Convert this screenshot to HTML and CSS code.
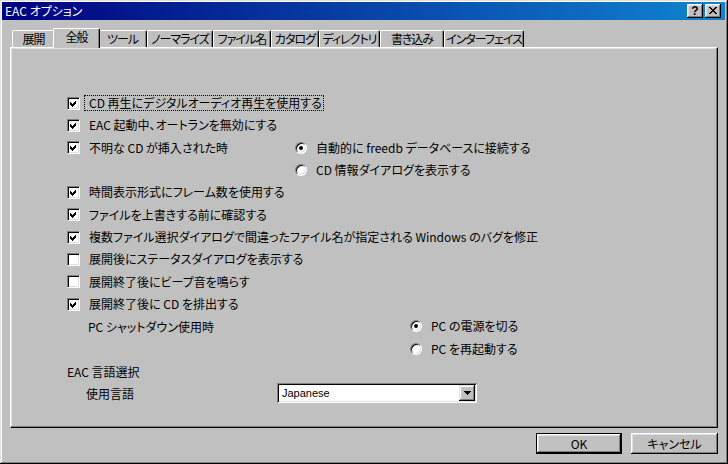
FILE: index.html
```html
<!DOCTYPE html>
<html lang="ja">
<head>
    <meta charset="UTF-8">
    <title>EAC オプション</title>
    <link rel="stylesheet" href="styles.css">
</head>
<body>
    <div class="window">
        <div class="titlebar">
            <span class="title">EAC オプション</span>
            <div class="title-buttons">
                <span class="tbtn help">?</span>
                <span class="tbtn close">
                    <svg width="8" height="7" viewBox="0 0 8 7" shape-rendering="crispEdges"><path d="M0 0h2v1h1v1h2v-1h1v-1h2v1h-1v1h-1v1h-1v1h1v1h1v1h1v1h-2v-1h-1v-1h-2v1h-1v1h-2v-1h1v-1h1v-1h1v-1h-1v-1h-1v-1h-1z" fill="#000"/></svg>
                </span>
            </div>
        </div>

        <div class="content">
            <div class="tabs">
                <div class="tab">展開</div>
                <div class="tab active">全般</div>
                <div class="tab">ツール</div>
                <div class="tab">ノーマライズ</div>
                <div class="tab">ファイル名</div>
                <div class="tab">カタログ</div>
                <div class="tab">ディレクトリ</div>
                <div class="tab">書き込み</div>
                <div class="tab">インターフェイス</div>
            </div>

            <div class="panel">
                <div class="options">
                    <div class="row">
                        <span class="cb checked"><svg width="11" height="11" viewBox="0 0 11 11" shape-rendering="crispEdges"><path d="M2 4L4 6L8 2V5L4 9L2 7Z"/></svg></span>
                        <span class="label focus">CD 再生にデジタルオーディオ再生を使用する</span>
                    </div>
                    <div class="row">
                        <span class="cb checked"><svg width="11" height="11" viewBox="0 0 11 11" shape-rendering="crispEdges"><path d="M2 4L4 6L8 2V5L4 9L2 7Z"/></svg></span>
                        <span class="label">EAC 起動中、オートランを無効にする</span>
                    </div>
                    <div class="row">
                        <div class="lead wide">
                            <span class="cb checked"><svg width="11" height="11" viewBox="0 0 11 11" shape-rendering="crispEdges"><path d="M2 4L4 6L8 2V5L4 9L2 7Z"/></svg></span>
                            <span class="label">不明な CD が挿入された時</span>
                        </div>
                        <span class="radio on"></span>
                        <span class="label">自動的に freedb データベースに接続する</span>
                    </div>
                    <div class="row">
                        <div class="lead wide"></div>
                        <span class="radio"></span>
                        <span class="label">CD 情報ダイアログを表示する</span>
                    </div>
                    <div class="row">
                        <span class="cb checked"><svg width="11" height="11" viewBox="0 0 11 11" shape-rendering="crispEdges"><path d="M2 4L4 6L8 2V5L4 9L2 7Z"/></svg></span>
                        <span class="label">時間表示形式にフレーム数を使用する</span>
                    </div>
                    <div class="row">
                        <span class="cb checked"><svg width="11" height="11" viewBox="0 0 11 11" shape-rendering="crispEdges"><path d="M2 4L4 6L8 2V5L4 9L2 7Z"/></svg></span>
                        <span class="label">ファイルを上書きする前に確認する</span>
                    </div>
                    <div class="row">
                        <span class="cb checked"><svg width="11" height="11" viewBox="0 0 11 11" shape-rendering="crispEdges"><path d="M2 4L4 6L8 2V5L4 9L2 7Z"/></svg></span>
                        <span class="label">複数ファイル選択ダイアログで間違ったファイル名が指定される Windows のバグを修正</span>
                    </div>
                    <div class="row">
                        <span class="cb"></span>
                        <span class="label">展開後にステータスダイアログを表示する</span>
                    </div>
                    <div class="row">
                        <span class="cb"></span>
                        <span class="label">展開終了後にビープ音を鳴らす</span>
                    </div>
                    <div class="row">
                        <span class="cb checked"><svg width="11" height="11" viewBox="0 0 11 11" shape-rendering="crispEdges"><path d="M2 4L4 6L8 2V5L4 9L2 7Z"/></svg></span>
                        <span class="label">展開終了後に CD を排出する</span>
                    </div>
                    <div class="row">
                        <div class="lead shutdown">PC シャットダウン使用時</div>
                        <span class="radio on"></span>
                        <span class="label">PC の電源を切る</span>
                    </div>
                    <div class="row">
                        <div class="lead shutdown"></div>
                        <span class="radio"></span>
                        <span class="label">PC を再起動する</span>
                    </div>
                    <div class="row">
                        <span class="heading">EAC 言語選択</span>
                    </div>
                    <div class="row">
                        <div class="lead lang">使用言語</div>
                        <div class="combo">
                            <span class="combo-text">Japanese</span>
                            <span class="combo-btn">
                                <svg width="7" height="4" viewBox="0 0 7 4" shape-rendering="crispEdges"><path d="M0 0h7v1h-1v1h-1v1h-1v1h-1v-1h-1v-1h-1v-1h-1z"/></svg>
                            </span>
                        </div>
                    </div>
                </div>
            </div>

            <div class="footer">
                <span class="btn default">OK</span>
                <span class="btn">キャンセル</span>
            </div>
        </div>
    </div>
</body>
</html>
```

FILE: styles.css
```css
* {
    box-sizing: border-box;
}
body {
    margin: 0;
    width: 728px;
    height: 464px;
    overflow: hidden;
    font-family: "Liberation Sans Narrow", "Noto Sans CJK JP", sans-serif;
    font-size: 12px;
    color: #000;
    background-color: #c0c0c0;
}
.window {
    width: 728px;
    height: 464px;
    padding: 2px 3px 2px 2px;
    background-color: #c0c0c0;
    box-shadow: inset -1px -1px #000, inset 1px 1px #dfdfdf, inset -2px -2px #808080, inset 2px 2px #fff;
}
.titlebar {
    height: 18px;
    display: flex;
    align-items: center;
    justify-content: space-between;
    padding: 0 4px 0 3px;
    background: linear-gradient(to right, #000080, #1084d0);
    color: #fff;
}
.title {
    font-family: "Noto Sans CJK JP", sans-serif;
    font-feature-settings: "palt";
    line-height: 14px;
}
.title-buttons {
    display: flex;
    gap: 2px;
}
.tbtn {
    width: 16px;
    height: 14px;
    display: flex;
    align-items: center;
    justify-content: center;
    background-color: #c0c0c0;
    color: #000;
    box-shadow: inset -1px -1px #000, inset 1px 1px #fff, inset -2px -2px #808080, inset 2px 2px #dfdfdf;
}
.help {
    font-family: "Liberation Sans", sans-serif;
    font-weight: bold;
    font-size: 12px;
    line-height: 12px;
    padding-bottom: 1px;
}
.close svg {
    margin-bottom: 1px;
}
.content {
    padding: 0 7px 0 8px;
}

/* tab strip */
.tabs {
    margin-top: 8px;
    height: 19px;
    padding-left: 2px;
    display: flex;
    align-items: flex-end;
    font-family: "Noto Sans CJK JP", sans-serif;
    font-feature-settings: "palt";
    letter-spacing: -1px;
}
.tab {
    flex: none;
    height: 17px;
    line-height: 15px;
    text-align: center;
    white-space: nowrap;
    border-top: 1px solid #fff;
    border-left: 1px solid #fff;
    border-right: 1px solid #000;
    border-radius: 2px 2px 0 0;
    box-shadow: inset -1px 0 #808080;
    background-color: #c0c0c0;
}
.tab:nth-child(1) { width: 43px; }
.tab:nth-child(2) { width: 47px; }
.tab:nth-child(3) { width: 49px; }
.tab:nth-child(4) { width: 66px; }
.tab:nth-child(5) { width: 58px; }
.tab:nth-child(6) { width: 48px; }
.tab:nth-child(7) { width: 61px; }
.tab:nth-child(8) { width: 64px; }
.tab:nth-child(9) { width: 80px; }
.tab.active {
    position: relative;
    z-index: 1;
    height: 20px;
    margin: 0 -2px -1px;
    line-height: 16px;
}

.panel {
    height: 381px;
    padding: 44px 0 0 56px;
    border-top: 1px solid #fff;
    border-left: 1px solid #fff;
    border-right: 1px solid #000;
    border-bottom: 1px solid #000;
    box-shadow: inset -1px -1px #808080, inset 1px 1px #dfdfdf;
}
.options {
    display: grid;
    grid-auto-rows: 22.33px;
    font-feature-settings: "palt";
}
.row {
    display: flex;
    align-items: center;
}
.lead {
    display: flex;
    align-items: center;
    flex: none;
}
.lead.wide {
    width: 228px;
}
.lead.shutdown {
    width: 343px;
    padding-left: 21px;
}
.lead.lang {
    width: 210px;
    padding-left: 19px;
}
.cb {
    width: 13px;
    height: 13px;
    flex: none;
    display: flex;
    align-items: center;
    justify-content: center;
    background-color: #fff;
    border: 1px solid;
    border-color: #808080 #fff #fff #808080;
    box-shadow: inset 1px 1px #000, inset -1px -1px #dfdfdf;
}
.cb svg {
    fill: #000;
}
.radio {
    position: relative;
    width: 12px;
    height: 12px;
    flex: none;
    border-radius: 50%;
    background-color: #fff;
    border: 1px solid;
    border-color: #808080 #fff #fff #808080;
    box-shadow: inset 1px 1px #000, inset -1px -1px #dfdfdf;
}
.radio.on::after {
    content: "";
    position: absolute;
    left: 3px;
    top: 3px;
    width: 4px;
    height: 4px;
    border-radius: 50%;
    background-color: #000;
}
.label {
    margin-left: 4px;
    padding: 0 1px 0 4px;
    line-height: 14px;
    border: 1px dotted transparent;
    white-space: nowrap;
}
.label.focus {
    border-color: #000;
}
.combo {
    width: 200px;
    height: 20px;
    display: flex;
    align-items: center;
    justify-content: space-between;
    padding: 2px;
    background-color: #fff;
    box-shadow: inset 1px 1px #808080, inset -1px -1px #fff, inset 2px 2px #000, inset -2px -2px #dfdfdf;
}
.combo-text {
    padding-left: 3px;
    font-family: "Liberation Sans", sans-serif;
    font-size: 11px;
}
.combo-btn {
    width: 16px;
    height: 16px;
    display: flex;
    align-items: center;
    justify-content: center;
    background-color: #c0c0c0;
    box-shadow: inset -1px -1px #000, inset 1px 1px #dfdfdf, inset -2px -2px #808080, inset 2px 2px #fff;
}
.footer {
    margin-top: 5px;
    display: flex;
    justify-content: flex-end;
    gap: 9px;
}
.btn {
    height: 21px;
    display: flex;
    align-items: center;
    justify-content: center;
    font-family: "Noto Sans CJK JP", sans-serif;
    font-feature-settings: "palt";
    background-color: #c0c0c0;
    box-shadow: inset -1px -1px #000, inset 1px 1px #fff, inset -2px -2px #808080, inset 2px 2px #dfdfdf;
}
.btn.default {
    width: 86px;
    border: 1px solid #000;
}
.btn + .btn {
    width: 87px;
}
```
